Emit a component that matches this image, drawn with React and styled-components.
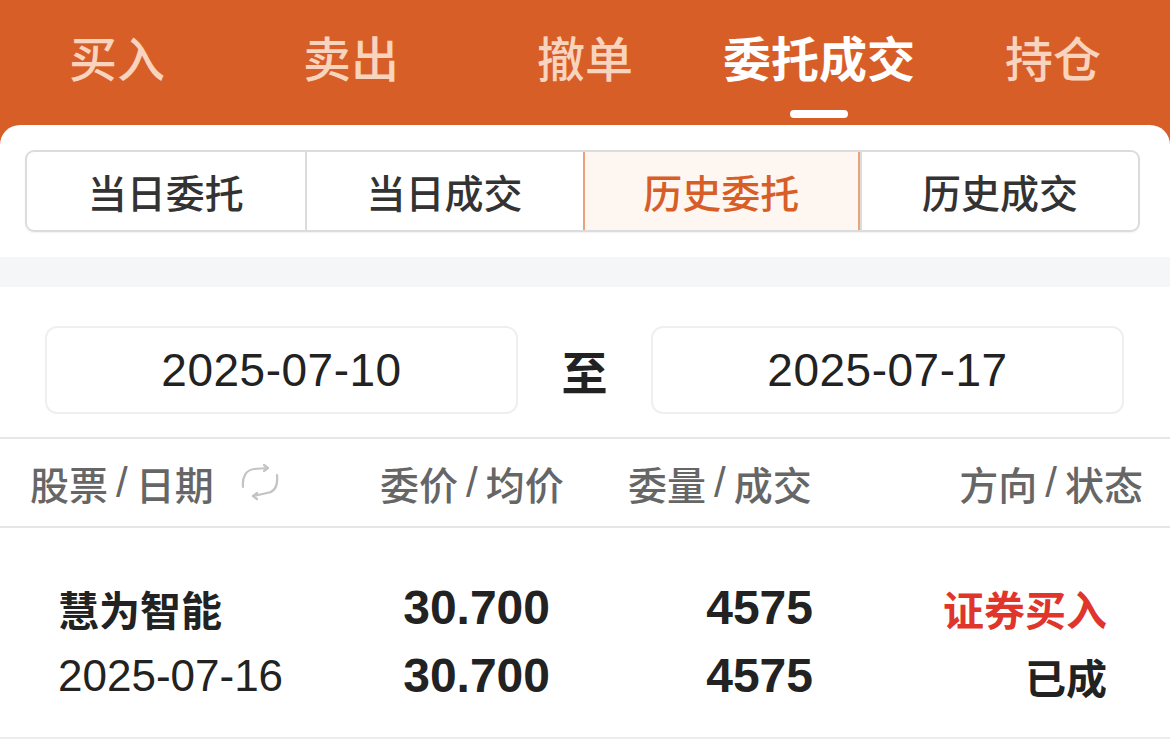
import React from "react";
import styled, { createGlobalStyle, css } from "styled-components";

const Global = createGlobalStyle`
  html, body { margin: 0; padding: 0; background: #ffffff; }
  body { font-family: "Liberation Sans", "Noto Sans CJK SC", sans-serif; }
  * { box-sizing: border-box; }
`;

const ORANGE = "#D85E28";

const Page = styled.div`
  width: 1170px;
  height: 756px;
  overflow: hidden;
  background: ${ORANGE};
  display: flex;
  flex-direction: column;
`;

const TabBar = styled.nav`
  height: 125px;
  display: grid;
  grid-template-columns: repeat(5, 1fr);
`;

const Tab = styled.div`
  position: relative;
  display: flex;
  justify-content: center;
  padding-top: 26px;
  font-family: "Noto Sans CJK SC", sans-serif;
  font-size: 48px;
  line-height: 60px;
  color: ${(p) => (p.$active ? "#ffffff" : "#F8D3BD")};
  font-weight: ${(p) => (p.$active ? 700 : 500)};
`;

const Indicator = styled.span`
  position: absolute;
  left: 50%;
  bottom: 7px;
  width: 58px;
  height: 8px;
  margin-left: -29px;
  border-radius: 4px;
  background: #ffffff;
`;

const Card = styled.main`
  flex: 1;
  background: #ffffff;
  border-radius: 20px 20px 0 0;
  display: flex;
  flex-direction: column;
`;

const Segments = styled.div`
  margin: 25px 30px 25px 25px;
  height: 82px;
  display: grid;
  grid-template-columns: repeat(4, 1fr);
  border: 2px solid #dcdcdc;
  border-radius: 9px;
  overflow: hidden;
  box-shadow: 0 1px 2px rgba(0, 0, 0, 0.06);
`;

const Segment = styled.div`
  display: flex;
  align-items: center;
  justify-content: center;
  font-family: "Noto Sans CJK SC", sans-serif;
  font-size: 39px;
  font-weight: 500;
  color: #333333;
  border-left: 2px solid #dcdcdc;
  &:first-child { border-left: none; }
  ${(p) =>
    p.$active &&
    css`
      background: #fdf6f1;
      color: ${ORANGE};
      border: 2px solid #e8a27c;
      margin: -2px 0;
    `}
`;

const Band = styled.div`
  height: 30px;
  background: #f5f6f8;
`;

const DateRow = styled.div`
  display: flex;
  align-items: center;
  padding: 39px 46px 23px 45px;
  border-bottom: 2px solid #e6e6e6;
`;

const DateBox = styled.div`
  flex: 1;
  height: 88px;
  border: 2px solid #efefef;
  border-radius: 12px;
  display: flex;
  align-items: center;
  justify-content: center;
  font-size: 46px;
  letter-spacing: 0.5px;
  color: #222222;
  font-weight: 500;
`;

const To = styled.div`
  width: 133px;
  text-align: center;
  font-family: "Noto Sans CJK SC", sans-serif;
  font-size: 46px;
  font-weight: 700;
  color: #222222;
`;

const HeadRow = styled.div`
  height: 89px;
  display: grid;
  grid-template-columns: 350px 248px 1fr auto;
  align-items: center;
  padding: 0 27px 0 30px;
  border-bottom: 2px solid #e6e6e6;
`;

const HeadCell = styled.div`
  display: flex;
  align-items: center;
  font-family: "Noto Sans CJK SC", sans-serif;
  font-size: 39px;
  color: #666666;
  font-weight: 500;
`;

const Slash = styled.span`
  margin: 0 8px;
  font-family: "Liberation Sans", sans-serif;
  font-size: 42px;
`;

const RefreshIcon = styled.svg`
  width: 40px;
  height: 40px;
  margin-left: 26px;
`;

const DataRow = styled.div`
  display: grid;
  grid-template-columns: 250px 242px 263px 1fr;
  grid-auto-rows: 50px;
  row-gap: 18px;
  align-items: center;
  padding: 55px 63px 36px 58px;
  border-bottom: 2px solid #ececec;
`;

const Cell = styled.div`
  color: ${(p) => (p.$red ? "#E0352B" : "#222222")};
  text-align: ${(p) => (p.$right ? "right" : "left")};
  font-weight: ${(p) => (p.$bold ? 700 : 400)};
  font-size: ${(p) => (p.$num ? "48px" : p.$date ? "44px" : "41px")};
  font-family: ${(p) =>
    p.$num || p.$date
      ? `"Liberation Sans", "Noto Sans CJK SC", sans-serif`
      : `"Noto Sans CJK SC", sans-serif`};
  line-height: 50px;
  white-space: nowrap;
`;

const tabs = ["买入", "卖出", "撤单", "委托成交", "持仓"];
const segs = ["当日委托", "当日成交", "历史委托", "历史成交"];

function Label({ a, b, children }) {
  return (
    <HeadCell>
      {a}
      <Slash>/</Slash>
      {b}
      {children}
    </HeadCell>
  );
}

export default function App() {
  return (
    <>
      <Global />
      <Page>
        <TabBar>
          {tabs.map((t, i) => (
            <Tab key={t} $active={i === 3}>
              {t}
              {i === 3 && <Indicator />}
            </Tab>
          ))}
        </TabBar>
        <Card>
          <Segments>
            {segs.map((s, i) => (
              <Segment key={s} $active={i === 2}>
                {s}
              </Segment>
            ))}
          </Segments>
          <Band />
          <DateRow>
            <DateBox>2025-07-10</DateBox>
            <To>至</To>
            <DateBox>2025-07-17</DateBox>
          </DateRow>
          <HeadRow>
            <Label a="股票" b="日期">
              <RefreshIcon viewBox="0 0 40 40" fill="none" stroke="#c4c4c4" strokeWidth="2.2" strokeLinecap="round" strokeLinejoin="round">
                <path d="M3 24 C2 14 6 7 14 6 L28 5" />
                <path d="M24 2 L28 5 L24 8" />
                <path d="M37 12 C38 22 35 29 27 30 L13 33" />
                <path d="M17 30 L13 33 L17 36" />
              </RefreshIcon>
            </Label>
            <Label a="委价" b="均价" />
            <Label a="委量" b="成交" />
            <Label a="方向" b="状态" />
          </HeadRow>
          <DataRow>
            <Cell $bold>慧为智能</Cell>
            <Cell $num $bold $right>30.700</Cell>
            <Cell $num $bold $right>4575</Cell>
            <Cell $bold $right $red>证券买入</Cell>
            <Cell $date>2025-07-16</Cell>
            <Cell $num $bold $right>30.700</Cell>
            <Cell $num $bold $right>4575</Cell>
            <Cell $bold $right>已成</Cell>
          </DataRow>
        </Card>
      </Page>
    </>
  );
}
